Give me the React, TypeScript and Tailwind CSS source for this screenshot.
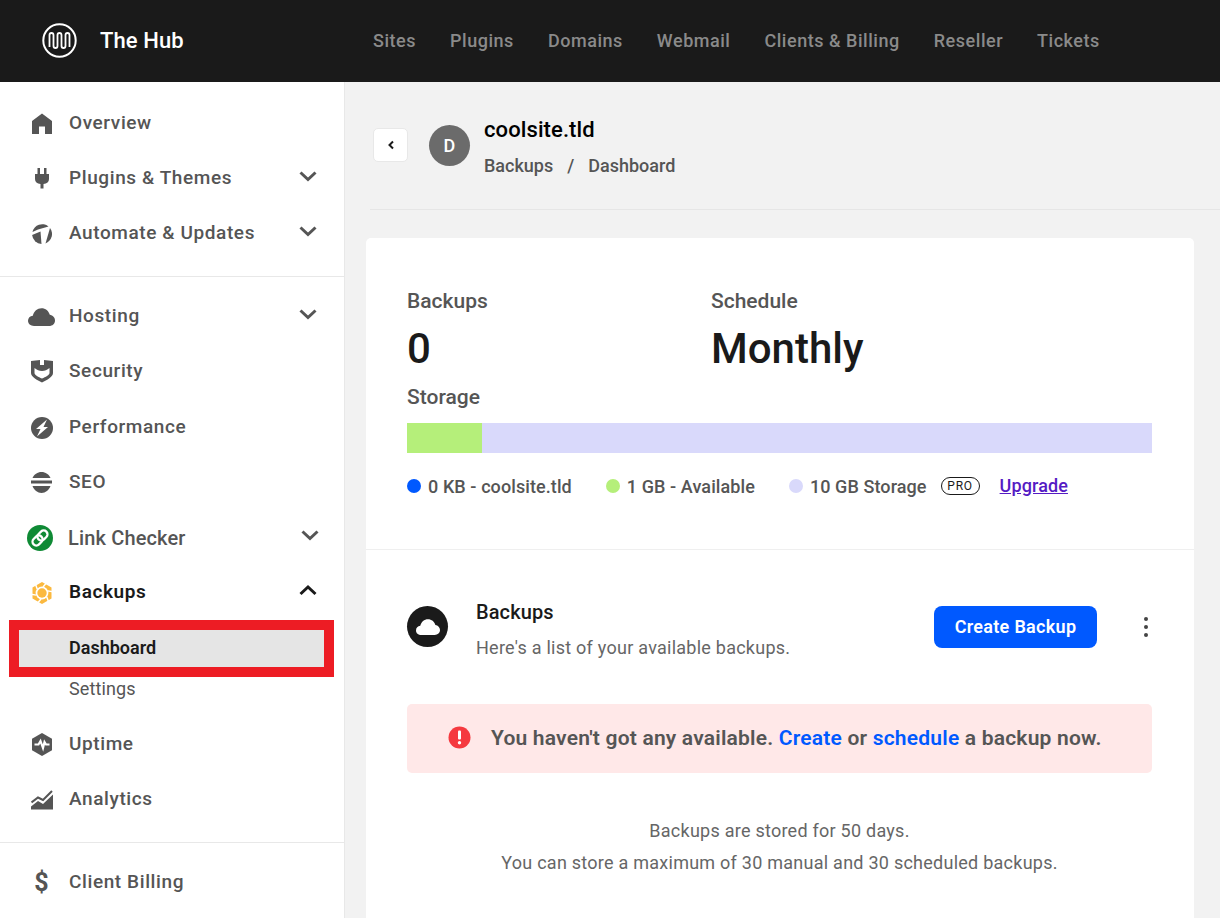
import type { ReactNode } from 'react';

const Chevron = ({ up = false, dark = false }: { up?: boolean; dark?: boolean }) => (
  <svg className="mb-[5px]" width="18" height="12" viewBox="0 0 18 12" fill="none" stroke={dark ? '#1a1a1a' : '#555'} strokeWidth="3">
    <path d={up ? 'M1.500 10 L9 3 L16.500 10' : 'M1.500 2.500 L9 9.500 L16.500 2.500'} />
  </svg>
);

const icons: Record<string, ReactNode> = {
  home: (
    <svg width="20" height="22" viewBox="0 0 20 22" fill="#555">
      <path d="M10 0.500 L20 8 V21 H13 V13.500 H7 V21 H0 V8 Z" />
    </svg>
  ),
  plug: (
    <svg width="14" height="21" viewBox="0 0 14 21" fill="#555">
      <path d="M2.500 0 H5 V6 H9 V0 H11.500 V6 H14 V11 C14 14 12 15.800 8.500 16 V20.500 H5.500 V16 C2 15.800 0 14 0 11 V6 H2.500 Z" />
    </svg>
  ),
  automate: (
    <svg width="20" height="20" viewBox="0 0 20 20" fill="#555">
      <path d="M0.500 8 A10 10 0 0 1 16.500 2.400 L6 5.500 Z" />
      <path d="M0.100 11 L8.500 7.500 L9.500 19.900 A10 10 0 0 1 0.100 11 Z" />
      <path d="M18 4 A10 10 0 0 1 13.500 19.400 Z" />
    </svg>
  ),
  cloud: (
    <svg width="27" height="18" viewBox="0 0 27 18" fill="#555">
      <path d="M6 18 C2.500 18 0 15.800 0 12.800 C0 10 2 8 4.800 7.700 C5.800 3.200 9.300 0.200 13.500 0.200 C17.500 0.200 20.800 2.800 21.800 6.800 C24.800 7.200 27 9.500 27 12.500 C27 15.800 24.500 18 21 18 Z" />
    </svg>
  ),
  shield: (
    <svg width="22" height="23" viewBox="0 0 22 23">
      <path fill="#555" d="M0 1 L9 0 V5 H13 V0 L22 1 V13 C22 17 16 20 11 22.500 C6 20 0 17 0 13 Z" />
      <path fill="#fff" d="M3.500 8 C6 10 8 11 11 11 C14 11 16 10 18.500 8 V13 C18.500 15 14.500 17 11 18.500 C7.500 17 3.500 15 3.500 13 Z" />
    </svg>
  ),
  bolt: (
    <svg width="22" height="22" viewBox="0 0 22 22">
      <circle cx="11" cy="11" r="11" fill="#555" />
      <path d="M16 2.500 L5 12 H9.500 L6 19.500 L17 10 H12.500 Z" fill="#fff" />
    </svg>
  ),
  seo: (
    <svg width="21" height="21" viewBox="0 0 21 21" fill="#555">
      <path d="M1.500 6 C3 2.500 6.500 0 10.500 0 C14.500 0 18 2.500 19.500 6 Z" />
      <rect x="0" y="8.500" width="21" height="3" />
      <path d="M1.500 14 H19.500 C18 18 14.500 21 10.500 21 C6.500 21 3 18 1.500 14 Z" />
    </svg>
  ),
  link: (
    <svg width="26" height="26" viewBox="0 0 26 26" fill="none">
      <circle cx="13" cy="13" r="13" fill="#0f8a35" />
      <g stroke="#fff" strokeWidth="2.300" transform="rotate(-45 13 13)">
        <rect x="4" y="9.200" width="11" height="7.600" rx="3.800" />
        <rect x="11" y="9.200" width="11" height="7.600" rx="3.800" />
      </g>
    </svg>
  ),
  backups: (
    <svg width="22" height="22" viewBox="0 0 22 22">
      <path d="M11 0 L20.500 5.500 V16.500 L11 22 L1.500 16.500 V5.500 Z" fill="#fbb93f" />
      <circle cx="11" cy="11" r="6.400" fill="#fff" />
      <circle cx="11" cy="11" r="4.700" fill="#fbb93f" />
      <g stroke="#fff" strokeWidth="1.500">
        <path d="M12 5 L17 -1" />
        <path d="M12 5 L17 -1" transform="rotate(60 11 11)" />
        <path d="M12 5 L17 -1" transform="rotate(120 11 11)" />
        <path d="M12 5 L17 -1" transform="rotate(180 11 11)" />
        <path d="M12 5 L17 -1" transform="rotate(240 11 11)" />
        <path d="M12 5 L17 -1" transform="rotate(300 11 11)" />
      </g>
    </svg>
  ),
  uptime: (
    <svg width="20" height="23" viewBox="0 0 20 23">
      <path d="M10 0 L20 5.700 V17.300 L10 23 L0 17.300 V5.700 Z" fill="#555" />
      <path d="M2.500 11.500 H6.500 L8.500 8 L11 15 L12.500 9 L14 11.500 H17.500" fill="none" stroke="#fff" strokeWidth="2.200" />
    </svg>
  ),
  analytics: (
    <svg width="22" height="20" viewBox="0 0 22 20">
      <path fill="#555" d="M0 19.500 V16.500 L7 11 L12 14 L22 4.500 V19.500 Z" />
      <path fill="none" stroke="#555" strokeWidth="2" d="M0.500 12.500 L7 7.500 L12 10 L21 1" />
    </svg>
  ),
};

const Row = ({ icon, label, chevron, bold = false }: { icon?: string; label: string; chevron?: 'up' | 'down'; bold?: boolean }) => (
  <div className="flex h-[55px] items-center pl-[28px] pr-[27px]">
    <span className="flex w-[27px] justify-center">{icon === 'dollar' ? <span className="text-[25px] leading-none font-bold text-[#555]">$</span> : icon && icons[icon]}</span>
    <span className={`ml-[14px] flex-1 text-[19px] tracking-[0.6px] ${bold ? 'font-semibold tracking-[0.2px] text-[#1a1a1a]' : 'font-medium text-[#555]'}`}>{label}</span>
    {chevron && <Chevron up={chevron === 'up'} dark={chevron === 'up'} />}
  </div>
);

const Legend = ({ color, children }: { color: string; children: ReactNode }) => (
  <div className="flex items-center gap-[7px]">
    <span className={`h-[14px] w-[14px] rounded-full ${color}`} />
    <span className="text-[18px] font-medium tracking-[0.09px] text-[#555]">{children}</span>
  </div>
);

export default function App() {
  return (
    <div className="flex h-[918px] w-[1220px] flex-col overflow-hidden bg-[#f2f2f2] font-['Roboto',sans-serif]">
      <header className="flex h-[82px] shrink-0 items-center bg-[#1a1a1a]">
        <div className="flex w-[373px] items-center pb-[2px] pl-[42px]">
          <svg width="35" height="35" viewBox="0 0 35 35" fill="none" stroke="#fff">
            <circle cx="17.500" cy="17.500" r="16.200" strokeWidth="2" />
            <path d="M7.500 24 V12 A2 2 0 0 1 11.500 12 V23 A2 2 0 0 0 15.500 23 V12 A2 2 0 0 1 19.500 12 V23 A2 2 0 0 0 23.500 23 V12 A2 2 0 0 1 27.500 12 V24" strokeWidth="1.800" />
          </svg>
          <span className="ml-[23px] text-[22px] font-medium tracking-[0.1px] text-white">The Hub</span>
        </div>
        <nav className="flex gap-[34px] pb-[2px] text-[18px] font-medium tracking-[0.53px] text-[#8a8a8a]">
          <span>Sites</span>
          <span>Plugins</span>
          <span>Domains</span>
          <span>Webmail</span>
          <span>Clients &amp; Billing</span>
          <span>Reseller</span>
          <span>Tickets</span>
        </nav>
      </header>

      <div className="flex min-h-0 flex-1">
        <aside className="w-[345px] shrink-0 border-r border-[#e8e8e8] bg-white">
          <div className="pt-[14px] pb-[15px]">
            <Row icon="home" label="Overview" />
            <Row icon="plug" label="Plugins & Themes" chevron="down" />
            <Row icon="automate" label="Automate & Updates" chevron="down" />
          </div>
          <div className="border-t border-[#e8e8e8] pt-[12px]">
            <Row icon="cloud" label="Hosting" chevron="down" />
            <div className="pb-[1px]">
              <Row icon="shield" label="Security" />
            </div>
            <Row icon="bolt" label="Performance" />
            <Row icon="seo" label="SEO" />
            <div className="flex h-[55px] items-center pl-[27px] pr-[25px]">
              <span className="flex w-[26px] justify-center">{icons.link}</span>
              <span className="ml-[15px] flex-1 text-[20px] font-medium tracking-[0.15px] text-[#555]">Link Checker</span>
              <Chevron />
            </div>
            <Row icon="backups" label="Backups" chevron="up" bold />
            <div className="mr-[10px] ml-[9px] flex h-[57px] items-center border-[10px] border-[#ed1c24] bg-[#e5e5e5] pb-[2px] pl-[50px] text-[18px] font-semibold text-[#1a1a1a]">
              Dashboard
            </div>
            <div className="flex h-[22px] items-center pl-[69px] text-[18px] tracking-[0.1px] text-[#555]">Settings</div>
            <div className="mt-[18px] pb-[15px]">
              <Row icon="uptime" label="Uptime" />
              <Row icon="analytics" label="Analytics" />
            </div>
          </div>
          <div className="border-t border-[#e8e8e8] pt-[12px]">
            <Row icon="dollar" label="Client Billing" />
          </div>
        </aside>

        <main className="min-w-0 flex-1">
          <div className="ml-[25px] flex h-[128px] items-start border-b border-[#e6e6e6] pt-[33px]">
            <div className="mt-[13px] ml-[3px] flex h-[34px] w-[35px] items-center justify-center rounded-[5px] border border-[#e8e8e8] bg-white">
              <svg width="8" height="10" viewBox="0 0 8 10" fill="none" stroke="#1a1a1a" strokeWidth="2">
                <path d="M6 1.500 L2.500 5 L6 8.500" />
              </svg>
            </div>
            <div className="mt-[10px] ml-[21px] flex h-[41px] w-[41px] items-center justify-center rounded-full bg-[#6b6b6b] text-[18px] font-medium text-white">D</div>
            <div className="mt-[1px] ml-[14px]">
              <div className="text-[22px] leading-[28px] font-medium tracking-[0.1px] text-black">coolsite.tld</div>
              <div className="mt-[10px] flex text-[18px] leading-[24px] font-medium text-[#555]">
                <span>Backups</span>
                <span className="mx-[14px]">/</span>
                <span>Dashboard</span>
              </div>
            </div>
          </div>

          <section className="mt-[28px] mr-[26px] ml-[21px] h-[700px] rounded-t-[5px] bg-white">
            <div className="h-[312px] border-b border-[#efefef] pt-[50px] pr-[42px] pl-[41px]">
              <div className="flex">
                <div className="w-[304px]">
                  <div className="text-[21px] leading-[26px] font-medium text-[#555]">Backups</div>
                  <div className="mt-[10px] text-[42px] leading-[50px] font-medium text-[#1a1a1a]">0</div>
                </div>
                <div>
                  <div className="text-[21px] leading-[26px] font-medium text-[#555]">Schedule</div>
                  <div className="mt-[10px] text-[42px] leading-[50px] font-medium text-[#1a1a1a]">Monthly</div>
                </div>
              </div>
              <div className="mt-[10px] text-[21px] leading-[26px] font-medium text-[#555]">Storage</div>
              <div className="mt-[13px] flex h-[30px] bg-[#d9d9fb]">
                <div className="w-[75px] bg-[#b5ef7a]" />
              </div>
              <div className="mt-[22px] flex h-[22px] items-center">
                <Legend color="bg-[#0059ff]">0 KB - coolsite.tld</Legend>
                <div className="ml-[34px]"><Legend color="bg-[#b5ef7a]">1 GB - Available</Legend></div>
                <div className="ml-[34px]"><Legend color="bg-[#d9d9fb]">10 GB Storage</Legend></div>
                <span className="ml-[14px] flex h-[18px] w-[39px] items-center justify-center rounded-full border border-[#1a1a1a] text-[12px] tracking-[0.8px] text-[#1a1a1a]">PRO</span>
                <span className="mb-[2px] ml-[20px] text-[18px] font-medium tracking-[0.1px] text-[#551bc4] underline">Upgrade</span>
              </div>
            </div>

            <div className="pt-[49px] pr-[42px] pl-[41px]">
              <div className="flex items-start">
                <div className="mt-[7px] flex h-[41px] w-[41px] items-center justify-center rounded-full bg-[#1a1a1a]">
                  <svg width="24" height="16" viewBox="0 0 27 18" fill="#fff">
                    <path d="M6 18 C2.500 18 0 15.800 0 12.800 C0 10 2 8 4.800 7.700 C5.800 3.200 9.300 0.200 13.500 0.200 C17.500 0.200 20.800 2.800 21.800 6.800 C24.800 7.200 27 9.500 27 12.500 C27 15.800 24.500 18 21 18 Z" />
                  </svg>
                </div>
                <div className="ml-[28px] flex-1">
                  <div className="text-[20px] leading-[26px] font-medium tracking-[0.1px] text-[#1a1a1a]">Backups</div>
                  <div className="mt-[11px] text-[18px] leading-[24px] tracking-[0.25px] text-[#666]">Here's a list of your available backups.</div>
                </div>
                <div className="mt-[7px] flex h-[42px] w-[163px] items-center justify-center rounded-[8px] bg-[#0059ff] pb-[1px] text-[18px] font-semibold tracking-[0.3px] text-white">Create Backup</div>
                <div className="mt-[18px] mr-[3px] ml-[46px] flex w-[6px] flex-col items-center gap-[4px]">
                  <span className="h-[4px] w-[4px] rounded-full bg-[#444]" />
                  <span className="h-[4px] w-[4px] rounded-full bg-[#444]" />
                  <span className="h-[4px] w-[4px] rounded-full bg-[#444]" />
                </div>
              </div>

              <div className="mt-[44px] flex h-[69px] items-center rounded-[5px] bg-[#ffe8e8] pl-[41px] text-[21px] font-semibold tracking-[0.2px] text-[#555]">
                <svg className="mb-[2px]" width="23" height="23" viewBox="0 0 23 23">
                  <circle cx="11.500" cy="11.500" r="11" fill="#f5393f" />
                  <rect x="10" y="4.500" width="3" height="9" rx="1" fill="#fff" />
                  <circle cx="11.500" cy="16.800" r="1.700" fill="#fff" />
                </svg>
                <span className="mt-[1px] ml-[20px]">
                  You haven't got any available. <span className="text-[#0059ff]">Create</span> or <span className="text-[#0059ff]">schedule</span> a backup now.
                </span>
              </div>

              <div className="mt-[42px] text-center text-[18px] leading-[31px] tracking-[0.25px] text-[#666]">
                <div>Backups are stored for 50 days.</div>
                <div className="mt-[0.5px]">You can store a maximum of 30 manual and 30 scheduled backups.</div>
              </div>
            </div>
          </section>
        </main>
      </div>
    </div>
  );
}
